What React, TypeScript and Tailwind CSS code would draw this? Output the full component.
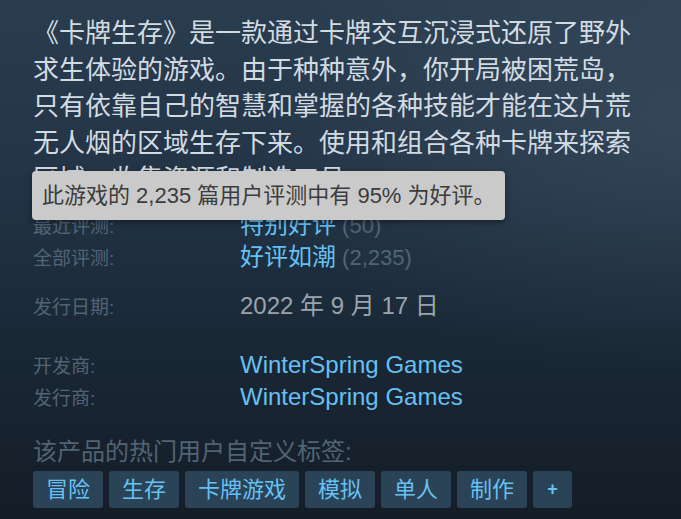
const font = "font-['Liberation_Sans','Noto_Sans_CJK_SC',sans-serif]";

const tags = ["冒险", "生存", "卡牌游戏", "模拟", "单人", "制作"];

function Row({ label, children }: { label: string; children: React.ReactNode }) {
  return (
    <div className="flex items-baseline h-8 leading-8">
      <div className="w-[207px] shrink-0 text-[19px] text-[#526474]">{label}</div>
      <div className="text-[24px] whitespace-nowrap">{children}</div>
    </div>
  );
}

function App() {
  return (
    <div
      className={`${font} relative w-[681px] h-[519px] overflow-hidden bg-[linear-gradient(180deg,#2a3d4f_0%,#223446_35%,#1a2836_65%,#141d27_100%)]`}
    >
      <div className="absolute inset-0 bg-[radial-gradient(ellipse_at_100%_25%,rgba(120,140,160,0.18),transparent_45%)]" />
      <div className="relative pl-[33px] pt-[13px]">
        <p className="w-[602px] text-[26px] leading-[36.5px] text-[#d3dbe2] font-['Noto_Sans_CJK_SC',sans-serif]">
          《卡牌生存》是一款通过卡牌交互沉浸式还原了野外求生体验的游戏。由于种种意外，你开局被困荒岛，只有依靠自己的智慧和掌握的各种技能才能在这片荒无人烟的区域生存下来。使用和组合各种卡牌来探索区域，收集资源和制造工具。
        </p>

        <div className="mt-[13px]">
          <Row label="最近评测:">
            <span className="text-[#66c0f4]">特别好评</span>
            <span className="text-[#526474] text-[22px]"> (50)</span>
          </Row>
          <Row label="全部评测:">
            <span className="text-[#66c0f4]">好评如潮</span>
            <span className="text-[#526474] text-[22px]"> (2,235)</span>
          </Row>
        </div>

        <div className="mt-[17px]">
          <Row label="发行日期:">
            <span className="text-[#9ba4ad]">2022 年 9 月 17 日</span>
          </Row>
        </div>

        <div className="mt-[27px]">
          <Row label="开发商:">
            <span className="text-[#66c0f4]">WinterSpring Games</span>
          </Row>
          <Row label="发行商:">
            <span className="text-[#66c0f4]">WinterSpring Games</span>
          </Row>
        </div>

        <div className="mt-[23px] h-8 flex items-center text-[24px] text-[#526474]">
          该产品的热门用户自定义标签:
        </div>

        <div className="mt-[3px] flex gap-[6px]">
          {tags.map((t) => (
            <div
              key={t}
              className="h-[37px] px-[13px] flex items-center rounded-[3px] bg-[#2a4356] text-[22px] text-[#67c1f5]"
            >
              {t}
            </div>
          ))}
          <div className="h-[37px] w-[39px] flex items-center justify-center rounded-[3px] bg-[#2a4356] text-[18px] font-bold text-[#67c1f5]">
            +
          </div>
        </div>
      </div>

      <div className="absolute left-[32px] top-[171px] w-[473px] h-[49px] flex items-center pl-[10px] rounded-[4px] bg-[#cacaca] shadow-[0_2px_6px_rgba(0,0,0,0.4)] text-[22px] text-[#3c3c3c] whitespace-nowrap">
        此游戏的 2,235 篇用户评测中有 95% 为好评。
      </div>
    </div>
  );
}

export default App;
